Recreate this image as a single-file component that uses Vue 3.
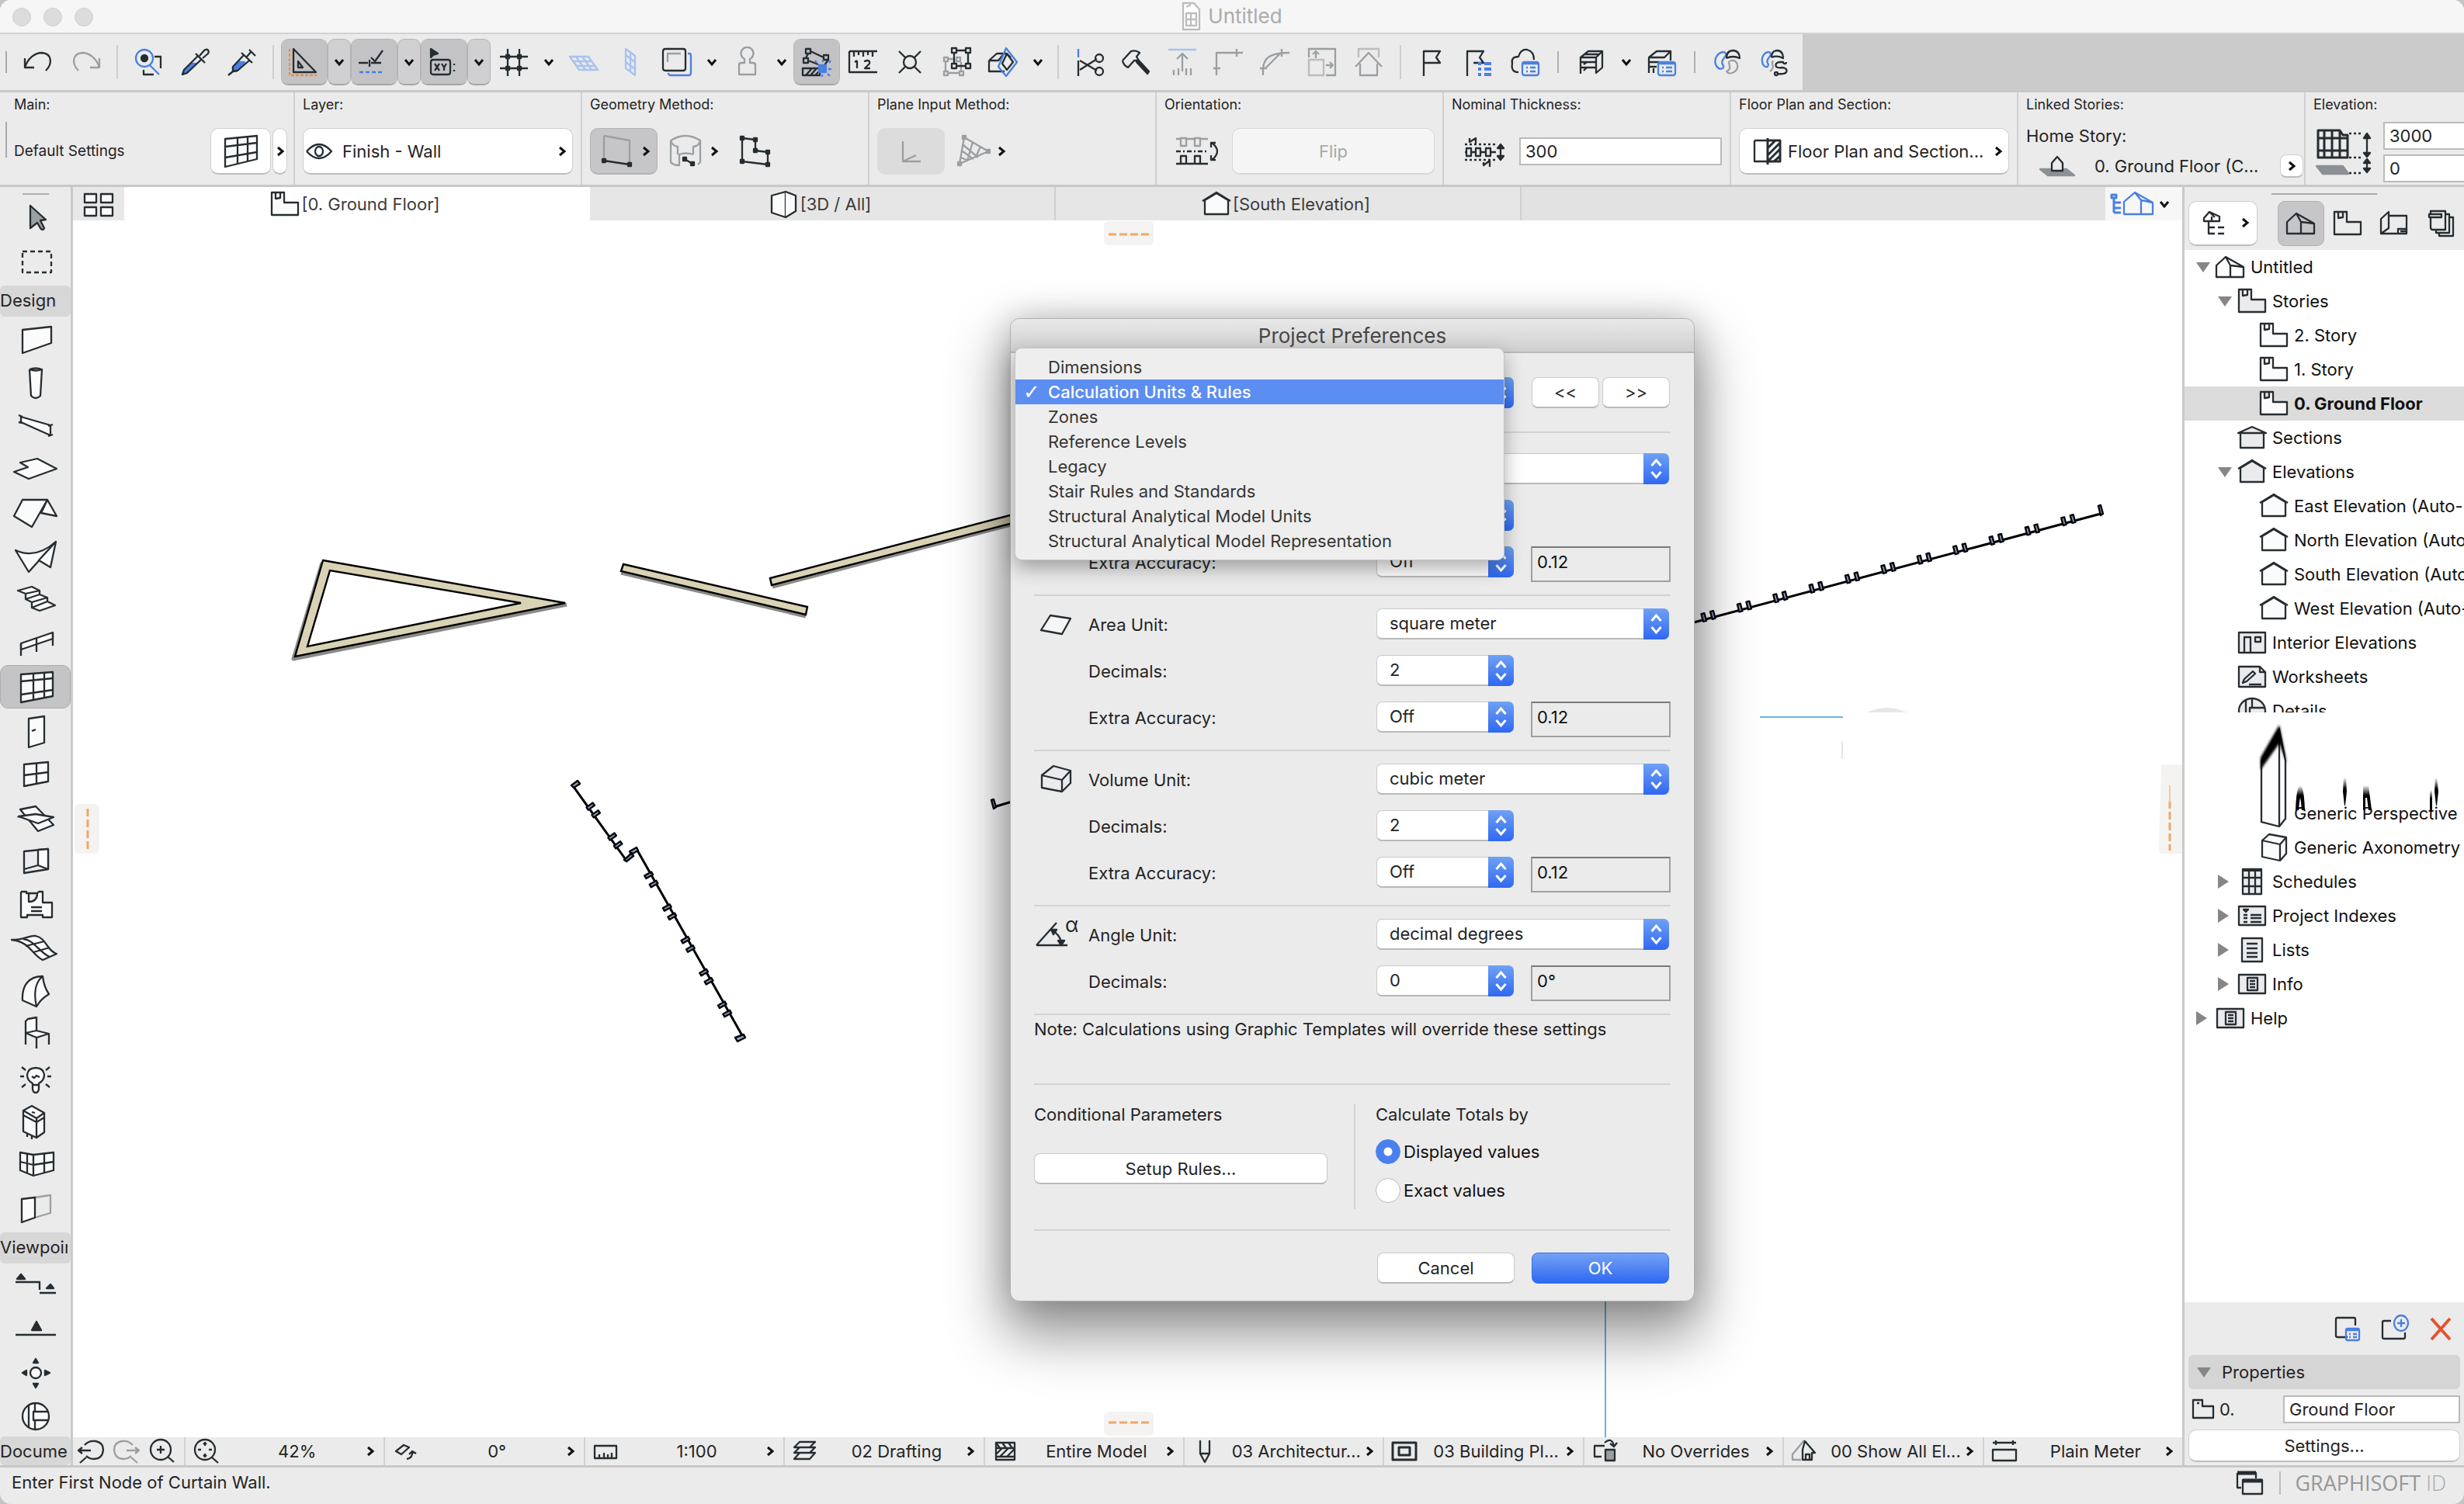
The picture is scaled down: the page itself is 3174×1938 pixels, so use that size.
<script setup>
import { h, ref } from 'vue'

const K = '#262d31'
const B = '#4a80e0'
const G = '#9b9fa2'
const L = '#a9c2f0'
const O = '#e58f4b'
const W = '#fbfbfb'
const E = '#ebebed'

// Each glyph is a list of [stroke, path, fill, dash, width] layers on a 40 x 40 grid.
const glyphs = {
  undo: [[K, 'M2 15V27H14M2 27C6 14 16 8 24 8C37 9 38 22 29 31']],
  redo: [[G, 'M38 15V27H26M38 27C34 14 24 8 16 8C3 9 2 22 11 31']],
  find: [[B, 'M4 15A11 11 0 1 1 26 15A11 11 0 1 1 4 15M22 24L34 36'], [K, 'M11 15A4 4 0 1 1 19 15A4 4 0 1 1 11 15', K], [K, 'M28 13H36V28M33 13H37M14 30V36H27M14 34V37']],
  dropper: [[B, 'M15 22L6 31L4 36L9 34L22 22Z', B], [K, 'M24 12L6 30L4 36L10 34L29 16M21 9L33 21M26 12L32 5C36 2 39 5 37 9L30 15']],
  syringe: [[B, 'M16 20L9 27V32L14 31L24 20Z', B], [K, 'M23 11L9 26V32L3 37M9 32L15 31L30 18M20 8L34 21M27 13L33 6M30 4L38 12']],
  setsquare: [[O, 'M1 3V37H36', 'none', '4 2'], [K, 'M6 3V33H35ZM12 19V27H18Z']],
  snap: [[K, 'M0 21H12M16 21H29M14 17V26M16 14L21 19L31 5'], [B, 'M1 33H30', 'none', '5 3']],
  coords: [[K, 'M3 3V14L6 11L12 9Z', K], [K, 'M6 17H25Q28 17 28 20V33Q28 36 25 36H6Q3 36 3 33V20Q3 17 6 17M8 22L14 31M14 22L8 31M17 22L20 27L23 22M20 27V31M33 22V24M33 30V32']],
  grid: [[K, 'M12 3V12M12 16V27M12 31V38M27 3V12M27 16V27M27 31V38M2 13H9M15 13H24M30 13H38M2 28H9M15 28H24M30 28H38'], [K, 'M10 11H14V15H10ZM25 11H29V15H25ZM10 26H14V30H10ZM25 26H29V30H25Z', K]],
  planeH: [[L, 'M2 13H26L38 30H14ZM10 13L22 30M18 13L30 30M6 19H30M10 25H34']],
  planeV: [[L, 'M14 3L26 12V37L14 28ZM20 8V32M14 11L26 20M14 20L26 29']],
  copy: [[B, 'M34 9H36Q38 9 38 12V34Q38 37 35 37H12Q9 37 9 34'], [K, 'M5 3H28Q31 3 31 6V28Q31 31 28 31H5Q2 31 2 28V6Q2 3 5 3'], [G, 'M8 20V9H25']],
  person: [[G, 'M17 21V16A8 8 0 1 1 24 16V21H28Q31 21 31 24V36H10V24Q10 21 13 21Z']],
  nodes: [[K, 'M6 3H12V9H6ZM3 15H9V21H3ZM29 11H35V17H29ZM12 6L29 14M9 9L6 15M9 18L22 23M35 17L30 24M2 28H24V37H2ZM6 37L14 28M12 37L20 28M18 37L24 31'], [B, 'M23 24H32V33H23Z', B], [B, 'M20 21L18 18M36 21L38 18M35 29H39M34 35L37 38M27 36V39M28 20V17']],
  measure: [[K, 'M2 6H38M2 6V33H38M8 7V13M14 7V11M20 7V13M26 7V11M32 7V13M12 18V28M9 20L12 18M22 20Q22 18 25 18Q29 18 28 22L22 28H29']],
  cross: [[K, 'M6 6L14 14M34 6L26 14M6 34L14 26M34 34L26 26M20 12A8 8 0 1 1 20 28A8 8 0 1 1 20 12']],
  group: [[G, 'M4 14H9V19H4ZM4 32H9V37H4ZM24 32H29V37H24ZM9 34H24M6 19V32M26 20V32M9 16H18M20 14H25V19H20Z'], [K, 'M14 2H20V8H14ZM32 2H38V8H32ZM14 22H20V28H14ZM32 22H38V28H32ZM20 5H32M20 25H32M17 8V22M35 8V22']],
  cube: [[K, 'M2 18L12 9H24L30 14M2 18V32H22M2 18H14L22 8'], [B, 'M24 2L38 20L24 38L14 26Z'], [K, 'M25 9L33 20L25 30L19 22Z']],
  scissors: [[B, 'M6 3V14'], [K, 'M6 18V38M8 18L30 31M8 30L30 16M28 32A5 5 0 1 1 38 32A5 5 0 1 1 28 32M28 15A5 5 0 1 1 38 15A5 5 0 1 1 28 15']],
  hammer: [[K, 'M3 18L14 6Q20 4 25 8L21 13L24 18L18 18L10 27Q4 24 3 18'], [K, 'M24 18L37 32L35 35L21 20Z', K]],
  align: [[L, 'M2 4H38'], [G, 'M20 32V9M13 16L20 9L27 16M9 30V37M15 28V37M25 28V37M31 28V37']],
  corner: [[G, 'M4 37V8H38M0 28H9M30 3V13']],
  curve: [[G, 'M4 37V28C5 14 14 8 38 8M0 28H9M28 3V13M7 28L26 9']],
  resize: [[G, 'M3 14V3H37V37H25M12 15V7M8 10L12 6L16 10M25 24H34M30 20L34 24L30 28'], ['#bcbcbc', 'M3 17H22V37H3Z']],
  roofup: [['#bcbcbc', 'M7 14V3H33V14'], [G, 'M3 26L20 8L37 26M9 22V37H31V22']],
  flag: [[K, 'M10 38V6H31L26 14L31 21H10']],
  flagList: [[K, 'M6 38V6H27L22 14L27 21H14'], [B, 'M20 22H24M28 22H37M20 29H24M28 29H37M20 36H24M28 36H37', 'none', '', 4]],
  cloud: [[K, 'M12 33Q2 33 4 22Q2 13 12 13Q15 3 23 4Q32 6 32 17'], [B, 'M20 20H35Q38 20 38 23V34Q38 37 35 37H20Q17 37 17 34V23Q17 20 20 20M18 22H37M22 27H24M27 27H34M22 32H24M27 32H34']],
  shelf: [[K, 'M6 35V14L16 6H34V27L26 34V14L34 6M6 14H26M6 20H26M6 27H26M12 10H30M10 23L14 20M10 31L14 27']],
  shelfList: [[K, 'M4 34V14L14 6H32V18M4 14H24L32 6M4 20H18M4 26H14M10 34V28'], [B, 'M19 20H35Q38 20 38 23V34Q38 37 35 37H19Q16 37 16 34V23Q16 20 19 20M17 22H37M21 27H23M26 27H34M21 32H23M26 32H34']],
  swirl: [[B, 'M14 7C5 8 1 18 5 25C9 31 17 29 13 23C9 17 19 14 17 9Q16 7 14 7'], [K, 'M18 15Q18 5 27 5Q35 6 35 15Q26 11 18 15'], [G, 'M24 18C16 20 28 27 18 32C22 38 34 32 32 23Q30 17 24 18']],
  swirlLink: [[B, 'M12 7C5 8 2 16 5 23C8 28 14 27 11 21C8 16 16 13 15 9Q14 7 12 7'], [K, 'M16 14Q16 5 24 5Q31 6 31 15Q23 11 16 14'], [G, 'M18 18C14 22 22 26 14 32'], [K, 'M35 20A2 2 0 1 1 31 20H26Q20 21 22 26Q24 28 30 27Q37 28 35 33Q33 36 24 35M24 35A2 2 0 1 1 20 35A2 2 0 1 1 24 35']],

  arrow: [[K, 'M13 4L33 22L26 23L31 33Q29 37 26 33L22 26L13 33Z', G]],
  marquee: [[K, 'M3 7H40V34H3Z', 'none', '6 4']],
  wall: [[K, 'M3 8L40 4V25L3 38Z', W]],
  column: [[K, 'M12 3L14 37Q20 43 26 37L28 3', W], [K, 'M12 3Q20 0 28 3Q20 6 12 3', W]],
  beam: [[K, 'M1 8L39 19V32L1 15Z', W], [K, 'M-2 6L3 8M-2 15L3 16M36 20L42 18M36 33L42 31']],
  slab: [[K, 'M0 11L22 6L47 19L11 32L-8 23L10 17Z', W]],
  roof: [[K, 'M3 3H35L15 38L-8 24Z', W], [K, 'M35 3L47 24L27 20Z', W]],
  shell: [[K, 'M-6 12Q20 24 46 1L11 40Z', W], [K, 'M46 1L39 34L24 25Z', W]],
  stair: [[K, 'M-3 8L15 3L25 8V13L35 17V22L45 27L25 34L15 30V23L7 19V12Z', W], [K, 'M7 12L25 8M7 19L25 13M15 23L35 17M15 30L35 22']],
  railing: [[K, 'M1 20L42 6V14L1 28Z', W], [K, 'M1 20V36M21 13V31M42 6V23']],
  curtain: [[K, 'M1 4L42 1V32L1 40Z', W], [K, 'M17 3V37M31 2V34M1 13L42 9M1 30L42 24']],
  door: [[K, 'M11 5L31 2V36L11 42Z', W], [K, 'M15 21L20 19']],
  window: [[K, 'M5 8L36 5V30L5 36Z', W], [K, 'M21 6V33M5 22L36 18']],
  skylight: [[G, 'M-4 20L20 16', 'none'], [K, 'M0 10L20 6L43 30L23 38Z', W], [K, 'M-2 19L20 16L43 20L23 28Z', W]],
  opening: [[K, 'M5 8L36 5V31L5 36Z', E], [K, 'M23 6L36 5V31L23 26Z', W], [K, 'M5 31L23 26']],
  zone: [[K, 'M1 4H8V6H21M11 6V17C19 17 22 12 22 6L24 4H29V18H41V37H29V34H9V37H1V4', W], [K, 'M14 24H28M14 29H28']],
  mesh: [[K, 'M-11 10C5 10 12 4 20 5C34 8 34 24 47 28L29 36C16 30 12 12 -11 10Z', W], [K, 'M4 9C18 10 24 26 38 32M7 18L31 12M17 26L38 20']],
  morph: [[K, 'M3 32C2 14 10 1 29 1C30 12 33 18 37 24C30 28 25 33 21 40Z', W], [K, 'M29 1C20 8 17 22 21 40']],
  chair: [[K, 'M7 18V3L10 0L21 -2V15ZM7 18L21 15L37 19L21 24Z', W], [K, 'M7 18V33M21 24V38M37 19V33']],
  lamp: [[K, 'M16 33V27Q9 23 9 16Q10 7 20 7Q30 7 31 16Q31 23 24 27V33Q24 39 20 39Q16 39 16 33M16 29H24', W], [K, 'M15 18L18 20L21 17L25 19M2 6L7 10M38 6L33 10M0 18H5M35 18H40M2 32L7 28M38 32L33 28']],
  cabinet: [[K, 'M4 6L15 0L31 9V34L21 41L4 33Z', W], [K, 'M4 6L21 16L31 9M4 12L21 21L31 15M21 16V41M9 36V40M15 39V43M15 8L19 9']],
  curtain2: [[K, 'M0 4L17 7L43 4V27L17 34L0 27Z', W], [K, 'M17 7V34M9 5V31M31 5V31M0 16L17 20L43 16']],
  panel: [[G, 'M19 6L39 3V26L19 32'], [K, 'M2 8L19 6V32L2 38Z', W]],
  section: [[K, 'M-6 15H25V25M25 29H46'], [K, 'M-4 11L1 5L6 11ZM34 23L39 18L43 23Z', K]],
  elevation: [[K, 'M-6 27H46'], [K, 'M15 21L21 10L27 21Z', K]],
  compass: [[K, 'M13 20A7 7 0 1 1 27 20A7 7 0 1 1 13 20', W], [K, 'M17 7L20 2L23 7ZM17 34L20 39L23 34ZM8 17L3 20L8 23ZM32 17L38 20L32 23Z', K]],
  detail: [[K, 'M3 20A17 17 0 1 1 37 20A17 17 0 1 1 3 20', W], [K, 'M11 6V34M19 3V14M19 25V37M36 14H17V25H36']],

  curtainBtn: [[K, 'M0 4L41 0V30L0 40Z', W], [K, 'M16 3V36M29 2V33M0 14L41 9M0 28L41 21']],
  eye: [[K, 'M4 20Q20 2 36 20Q20 38 4 20M15 20A5 6 0 1 1 25 20A5 6 0 1 1 15 20']],
  single: [[G, 'M3 0L36 6V34M3 0V32'], [K, 'M3 32L36 37M1 30H5V34H1ZM34 35H38V39H34Z', K]],
  column2: [[G, 'M1 6Q20 -6 39 6Q38 13 30 14V24M1 6Q3 13 10 14V24M1 6V34Q4 38 12 38V24Q20 21 30 24M39 6V34L36 37'], [K, 'M19 30L29 36M17 28H21V32H17ZM27 34H31V38H27Z', K]],
  polygon: [[K, 'M3 3L20 5V19L36 21V37L3 33Z'], [K, 'M1 1H5V5H1ZM18 3H22V7H18ZM18 17H22V21H18ZM34 19H38V23H34ZM34 35H38V39H34ZM1 31H5V35H1Z', K]],
  axis: [[G, 'M9 7V33H32M9 33L26 25']],
  net: [[G, 'M9 2L40 20L3 36ZM8 12L27 28M7 20L21 30M5 28L14 32M20 8L13 32M30 14L24 27'], [G, 'M7 0H11V4H7ZM38 18H42V22H38ZM1 34H5V38H1Z', G]],
  orient: [[G, 'M-8 4H-2M6 4H15M23 4H33M-2 3H5V13H-2ZM16 3H23V13H16Z'], [K, 'M-8 20H34', 'none', '6 3 2 3'], [K, 'M-8 36H-2M6 36H15M23 36H33M-2 26H5V36H-2ZM16 26H23V36H16ZM38 9Q52 20 38 31M43 9H37V15M43 31H37V25']],
  thick: [[K, 'M-6 11H34M-6 31H34', 'none', '3 3'], [K, 'M-6 21H-4M2 21H7M15 21H20M28 21H34M-4 16H2V26H-4ZM8 16H14V26H8ZM21 16H27V26H21ZM40 12V30M0 3V8L8 3V10M18 34V38L26 32V40'], [K, 'M36 16L40 11L44 16ZM36 26L40 31L44 26Z', K]],
  floorSection: [[K, 'M3 6H20M3 6V33H20', W], [K, 'M20 3V37M20 6H36V33H20M20 16L30 6M20 25L36 9M20 33L36 17M28 33L36 26', 'none', '', 3]],
  home: [['#8b9194', 'M-2 24H32L42 32H8Z', '#8b9194'], [K, 'M13 26V16L20 8L27 16V26Z', E]],
  height: [['#8b9194', 'M-14 38H20L27 48H-6Z', '#8b9194'], [K, 'M-12 -8H16L20 -2H26V27H-12ZM-4 -8V27M6 -8V27M16 -8V27M-12 2H26M-12 18H26', 'none', '', 3], [K, 'M28 -4H45M28 27H45M28 47H45', 'none', '3 3'], [K, 'M51 -2V24M51 30V45M47 2L51 -4L55 2ZM47 21L51 26L55 21ZM47 34L51 29L55 34ZM47 41L51 46L55 41Z', K]],

  overview: [[K, 'M2 7H17V18H2ZM23 7H38V18H23ZM2 24H17V35H2ZM23 24H38V35H23Z', W]],
  story: [[K, 'M3 5H19V18H37V34H3ZM8 5V13L14 12V5', W]],
  storyFill: [[K, 'M3 5H19V18H37V34H3ZM8 5V13L14 12V5', E]],
  box3d: [[K, 'M4 9L22 4V37L4 31Z', W], [K, 'M22 4L35 9V29L22 37', W]],
  house: [[K, 'M5 15L20 6L35 15V33H5ZM2 16L20 5L38 16', W]],
  houseFill: [[K, 'M5 15L20 6L35 15V33H5ZM2 16L20 5L38 16', E]],
  sectionFill: [[K, 'M5 14H35V33H5ZM2 14L20 6L38 14Z', E]],
  project: [[K, 'M2 18L14 7L20 18V33H2ZM14 7L37 20V33H20M20 18L37 20', 'none']],
  projectBlue: [[B, 'M0 17L14 5L22 15V33H0ZM14 5L37 18V33H22M22 15L37 18'], [B, 'M-16 8H-10V12H-16ZM-13 12V31M-13 18H-4M-13 25H-4M-13 31H-4', 'none', '', 3]],
  navTree: [[K, 'M4 14L11 6L24 12V18H4ZM14 12V18M11 6L18 13M10 18V34H18M10 26H18M22 26H30M22 34H30']],
  storyTab: [[K, 'M3 5H19V18H37V34H3ZM8 5V13L14 12V5']],
  layoutTab: [[K, 'M3 14L13 5V26L3 33ZM13 10H36V33H3M25 33V27H36M28 30H36']],
  books: [[K, 'M7 8V4H26V28H10Q7 28 7 25V12M5 8H21V12H5ZM26 8H31V32H14V28M31 12H36V36H18V32']],
  interior: [[K, 'M3 7H37V33H3Z', E], [K, 'M10 33V13H18V33M24 13H31V19H24Z']],
  worksheet: [[K, 'M3 7H30L37 14V33H3ZM30 7V14H37', E], [K, 'M8 28L10 23L21 13L24 16L13 26ZM16 30H32']],
  details: [[K, 'M3 22A17 16 0 1 1 37 22A17 16 0 1 1 3 22', E], [K, 'M12 8V36M20 6V18M36 18H17V36']],
  axo: [[K, 'M5 11L14 3L36 7V28L28 37L5 32ZM5 11L28 16L36 7M28 16V37', W]],
  schedule: [[K, 'M8 4H32V36H8ZM8 15H32M8 26H32M16 4V36M24 4V36', E], [K, 'M8 5H32', 'none', '', 4]],
  index: [[K, 'M3 8H37V32H3Z', E], [K, 'M9 19H14M18 19H32M9 23H14M18 23H32M9 28H14M18 28H32'], [K, 'M9 12H15L12 15Z', K]],
  lists: [[K, 'M7 5H33V35H7Z', E], [K, 'M13 12H27M13 18H27M13 24H27M13 29H27']],
  info: [[K, 'M3 8H37V32H3Z', E], [K, 'M14 12H27V28H14ZM17 16H24M17 20H24M17 24H24']],
  storySmall: [[K, 'M6 8H18V16H32V31H6ZM11 12H14']],

  zoomBack: [[K, 'M12 12Q17 6 26 7Q36 9 36 18Q35 30 24 30Q18 30 14 26M4 19H20M9 15L4 19L9 23M14 28L6 35']],
  zoomFwd: [[G, 'M28 12Q23 6 14 7Q4 9 4 18Q5 30 16 30Q22 30 26 26M36 19H20M31 15L36 19L31 23M26 28L34 35']],
  zoomIn: [[K, 'M5 18A12 12 0 1 1 31 18A12 12 0 1 1 5 18M27 27L35 34M13 18H23M18 13V23']],
  zoomFit: [[K, 'M6 18A13 13 0 1 1 32 18A13 13 0 1 1 6 18M28 28L36 35M19 9V13M19 23V27M10 18H14M24 18H28M17 11L19 9L21 11M17 25L19 27L21 25']],
  rotate: [[K, 'M8 20L18 12L25 15L15 24ZM22 30Q30 29 29 20M25 24L29 20L34 23']],
  scale: [[K, 'M6 13H34V29H6ZM12 29V24M18 29V22M23 29V24M28 29V22']],
  layers: [[K, 'M13 8H33L26 15H6ZM13 15H33L26 22H6ZM13 22H33L26 30H6Z']],
  model: [[K, 'M8 9H32V31H8ZM8 27H32M8 16H32M8 9L13 16M16 9L21 16M24 9L29 16M8 24L16 16M13 27L24 16M22 27L32 17']],
  pen: [[K, 'M14 6V23L20 34L26 23V6M14 23H26']],
  frame: [[K, 'M5 9H35V31H5ZM13 15H27V25H13Z', 'none', '', 3]],
  override: [[K, 'M20 13H7V27H16M20 9Q29 1 32 13M27 10L32 14L36 9'], [K, 'M21 18H33V32H21Z', G]],
  reno: [[G, 'M20 6L5 24V31H16'], [K, 'M18 31V18L21 7L34 22H30V31ZM22 31V24H27V31']],
  dim: [[K, 'M5 9H35M9 6V12M31 6V12M5 18H35V32H5Z']],
  settingsDoc: [[K, 'M20 31H7Q5 31 5 29V8Q5 6 7 6H28Q30 6 30 8V16'], [B, 'M20 20H33Q35 20 35 22V33Q35 35 33 35H20Q18 35 18 33V22Q18 20 20 20M18 22H35M22 27H24M27 27H32M22 31H24M27 31H32']],
  addDoc: [[K, 'M16 10H7Q5 10 5 12V31Q5 33 7 33H32Q34 33 34 31V25'], [B, 'M20 13A9 10 0 1 1 38 13A9 10 0 1 1 20 13M24 13H34M29 8V18']],
  remove: [['#e2532f', 'M8 7L32 34M32 7L8 34', 'none', '', 4]],
  windows: [[K, 'M4 7H28V14M4 7V26H9M11 16H36V34H11Z'], [K, 'M4 7H28M11 17H36', 'none', '', 5]],
  area: [[K, 'M4 28L16 9L42 13L31 33Z', '#f6f6f6']],
  volume: [[K, 'M5 15L20 3L42 9L31 21L31 36L5 31ZM31 36L42 25V9M5 15L31 21', E]],
  angle: [[K, 'M-2 34H38M-2 34L24 5M18 15Q28 20 30 30', 'none'], [K, 'M17 14H24L20 20ZM26 28H34L30 34Z', K]],
  doc: [['#bdbdbd', 'M10 3H24L31 11V37H10ZM14 16H27V32H14ZM14 24H27M20 16V32M14 8L20 5', '#fff']],
}

const Glyph = (props) =>
  h(
    'svg',
    { class: 'glyph', width: 40, height: 40, viewBox: '0 0 40 40', 'aria-hidden': 'true' },
    glyphs[props.name].map(([stroke, d, fill, dash, width]) =>
      h('path', {
        d,
        stroke,
        fill: fill || 'none',
        'stroke-width': width || 2.3,
        'stroke-dasharray': dash || undefined,
        'stroke-linejoin': 'round',
      })
    )
  )
Glyph.props = ['name']

const Chevron = (props) =>
  h('svg', { class: 'chev', width: 14, height: 14, viewBox: '0 0 14 14', 'aria-hidden': 'true' }, [
    h('path', { d: props.down ? 'M2 4L7 10L12 4' : 'M4 2L10 7L4 12', fill: 'none', stroke: '#111', 'stroke-width': 3 }),
  ])
Chevron.props = ['down']

const toolbar = [
  'undo', 'redo', '|', 'find', 'dropper', 'syringe', '|', '+setsquare', '+v', '+snap', '+v', '+coords', '+v',
  'grid', 'v', 'planeH', 'planeV', 'copy', 'v', 'person', 'v', '+nodes', 'measure', 'cross', 'group', 'cube', 'v', '|',
  'scissors', 'hammer', 'align', 'corner', 'curve', 'resize', 'roofup', '|', 'flag', 'flagList', 'cloud', '||',
  'shelf', 'v', 'shelfList', '||', 'swirl', 'swirlLink',
].map((raw) => {
  const on = raw[0] === '+'
  const name = on ? raw.slice(1) : raw
  return { name, on, kind: name === '|' ? 'sep' : name === '||' ? 'sep short' : name === 'v' ? 'drop' : 'tool' }
})

const designTools = ['wall', 'column', 'beam', 'slab', 'roof', 'shell', 'stair', 'railing', 'curtain', 'door', 'window', 'skylight', 'opening', 'zone', 'mesh', 'morph', 'chair', 'lamp', 'cabinet', 'curtain2', 'panel']
const viewTools = ['section', 'elevation', 'compass', 'detail']

const tabs = [
  { icon: 'story', label: '[0. Ground Floor]', on: true },
  { icon: 'box3d', label: '[3D / All]' },
  { icon: 'house', label: '[South Elevation]' },
]

const quick = [
  ['zoomFit', '42%'], ['rotate', '0°'], ['scale', '1:100'], ['layers', '02 Drafting'], ['model', 'Entire Model'],
  ['pen', '03 Architectur...'], ['frame', '03 Building Pl...'], ['override', 'No Overrides'], ['reno', '00 Show All El...'], ['dim', 'Plain Meter'],
]

const tree = [
  { l: 0, a: 'down', i: 'project', t: 'Untitled' },
  { l: 1, a: 'down', i: 'storyFill', t: 'Stories' },
  { l: 2, i: 'story', t: '2. Story' },
  { l: 2, i: 'story', t: '1. Story' },
  { l: 2, i: 'story', t: '0. Ground Floor', on: true },
  { l: 1, i: 'sectionFill', t: 'Sections' },
  { l: 1, a: 'down', i: 'houseFill', t: 'Elevations' },
  { l: 2, i: 'house', t: 'East Elevation (Auto-' },
  { l: 2, i: 'house', t: 'North Elevation (Auto-' },
  { l: 2, i: 'house', t: 'South Elevation (Auto-' },
  { l: 2, i: 'house', t: 'West Elevation (Auto-' },
  { l: 1, i: 'interior', t: 'Interior Elevations' },
  { l: 1, i: 'worksheet', t: 'Worksheets' },
  { l: 1, i: 'details', t: 'Details', cut: true },
  { l: 2, t: 'Generic Perspective', tall: true },
  { l: 2, i: 'axo', t: 'Generic Axonometry' },
  { l: 1, a: 'right', i: 'schedule', t: 'Schedules' },
  { l: 1, a: 'right', i: 'index', t: 'Project Indexes' },
  { l: 1, a: 'right', i: 'lists', t: 'Lists' },
  { l: 1, a: 'right', i: 'info', t: 'Info' },
  { l: 0, a: 'right', i: 'info', t: 'Help' },
]

const pages = ['Dimensions', 'Calculation Units & Rules', 'Zones', 'Reference Levels', 'Legacy', 'Stair Rules and Standards', 'Structural Analytical Model Units', 'Structural Analytical Model Representation']
const page = ref('Calculation Units & Rules')
const totals = ref('displayed')

const accuracy = (id) => ({ id: id + '-acc', label: 'Extra Accuracy:', value: 'Off', sample: '0.12' })
const blocks = [
  { rows: [{ id: 'len', label: '', value: '', wide: true }, { id: 'len-dec', label: '', value: '' }, accuracy('len')] },
  { icon: 'area', rows: [{ id: 'area', label: 'Area Unit:', value: 'square meter', wide: true }, { id: 'area-dec', label: 'Decimals:', value: '2' }, accuracy('area')] },
  { icon: 'volume', rows: [{ id: 'vol', label: 'Volume Unit:', value: 'cubic meter', wide: true }, { id: 'vol-dec', label: 'Decimals:', value: '2' }, accuracy('vol')] },
  { icon: 'angle', rows: [{ id: 'ang', label: 'Angle Unit:', value: 'decimal degrees', wide: true }, { id: 'ang-dec', label: 'Decimals:', value: '0', sample: '0°' }] },
]

// Mullion ticks along a curtain wall: start point, unit direction, distances along it, and side.
const ticks = (x, y, ux, uy, offsets, side) =>
  offsets.map((t) => {
    const px = x + ux * t
    const py = y + uy * t
    const nx = uy * side
    const ny = -ux * side
    const a = [px - ux * 2 - nx * 2, py - uy * 2 - ny * 2]
    return `M${a}l${ux * 4} ${uy * 4}l${nx * 10} ${ny * 10}l${-ux * 4} ${-uy * 4}z`
  }).join('')
const pairs = (first, pitch, gap, n) => Array.from({ length: n }, (_, i) => [first + i * pitch, first + i * pitch + gap]).flat()
const mullions = [
  ticks(739, 1014, 0.582, 0.813, [33, 45, 81, 94], 1),
  ticks(820, 1094, 0.493, 0.87, [37, 50, 85, 98, 133, 146, 181, 194, 229, 242], -1),
  ticks(2182, 802, 0.966, -0.258, pairs(14, 48, 12, 11), 1),
].join('')
</script>

<template>
  <div class="app">
    <header class="titlebar">
      <div class="lights"><i></i><i></i><i></i></div>
      <h1><Glyph name="doc" />Untitled</h1>
    </header>

    <div class="toolbar-row">
      <nav class="toolbar">
        <template v-for="(t, n) in toolbar" :key="n">
          <span v-if="t.name[0] === '|'" :class="t.kind"></span>
          <button v-else :class="[t.kind, { on: t.on }]" :aria-label="t.kind === 'drop' ? 'More' : t.name">
            <Chevron v-if="t.kind === 'drop'" down="1" />
            <Glyph v-else :name="t.name" />
          </button>
        </template>
      </nav>
    </div>

    <section class="infobox">
      <div class="cell first">
        <h2>Main:</h2>
        <div class="line spread">
          <span class="small">Default Settings</span>
          <span class="duo">
            <button class="pill sq" aria-label="Curtain wall settings"><Glyph name="curtainBtn" /></button>
            <button class="pill thin" aria-label="Favorites"><Chevron /></button>
          </span>
        </div>
      </div>
      <div class="cell">
        <h2>Layer:</h2>
        <div class="line"><button class="pill full"><Glyph name="eye" /><span class="grow">Finish - Wall</span><Chevron /></button></div>
      </div>
      <div class="cell">
        <h2>Geometry Method:</h2>
        <div class="line">
          <button class="pill method on" aria-label="Single"><Glyph name="single" /><Chevron /></button>
          <button class="bare method" aria-label="Cylinder"><Glyph name="column2" /><Chevron /></button>
          <button class="bare sq" aria-label="Polygon"><Glyph name="polygon" /></button>
        </div>
      </div>
      <div class="cell">
        <h2>Plane Input Method:</h2>
        <div class="line">
          <button class="pill method off" disabled aria-label="Plane"><Glyph name="axis" /></button>
          <button class="bare method" aria-label="Net"><Glyph name="net" /><Chevron /></button>
        </div>
      </div>
      <div class="cell">
        <h2>Orientation:</h2>
        <div class="line"><span class="lead"><Glyph name="orient" /></span><button class="pill flip" disabled>Flip</button></div>
      </div>
      <div class="cell">
        <h2><label for="thick">Nominal Thickness:</label></h2>
        <div class="line"><span class="lead"><Glyph name="thick" /></span><input id="thick" class="box" value="300" /></div>
      </div>
      <div class="cell">
        <h2>Floor Plan and Section:</h2>
        <div class="line"><button class="pill full plan"><Glyph name="floorSection" /><span class="grow">Floor Plan and Section...</span><Chevron /></button></div>
      </div>
      <div class="cell linked">
        <h2>Linked Stories:</h2>
        <div class="home">Home Story:</div>
        <div class="story"><Glyph name="home" /><span class="grow">0. Ground Floor (C...</span><button class="pill mini" aria-label="Choose story"><Chevron /></button></div>
      </div>
      <div class="cell last">
        <h2>Elevation:</h2>
        <div class="elev">
          <Glyph name="height" />
          <div class="fields"><input class="box" aria-label="Top elevation" value="3000" /><input class="box" aria-label="Bottom elevation" value="0" /></div>
        </div>
      </div>
    </section>

    <main class="work">
      <aside class="tools">
        <div class="tool-list">
          <i class="grip"></i>
          <button aria-label="arrow"><Glyph name="arrow" /></button>
          <button aria-label="marquee"><Glyph name="marquee" /></button>
          <h3><span>Design</span></h3>
          <button v-for="t in designTools" :key="t" :aria-label="t" :class="{ on: t === 'curtain' }"><Glyph :name="t" /></button>
          <h3><span>Viewpoint</span></h3>
          <button v-for="t in viewTools" :key="t" :aria-label="t"><Glyph :name="t" /></button>
        </div>
        <h3 class="bottom"><span>Document</span></h3>
      </aside>

      <section class="center">
        <div class="tabs">
          <button class="overview" aria-label="Tab overview"><Glyph name="overview" /></button>
          <button v-for="t in tabs" :key="t.label" class="tab" :class="{ on: t.on }"><Glyph :name="t.icon" /><span>{{ t.label }}</span></button>
          <button class="popnav" aria-label="Navigator"><Glyph name="projectBlue" /><Chevron down="1" /></button>
        </div>

        <div class="canvas">
          <svg class="drawing" viewBox="94 284 2717 1568" preserveAspectRatio="xMinYMin slice" aria-hidden="true">
            <g fill="#f4f3f2">
              <rect x="1422" y="285" width="64" height="31" rx="6" />
              <rect x="1422" y="1819" width="64" height="31" rx="6" />
              <rect x="96" y="1036" width="32" height="64" rx="6" />
              <path d="M2784 985H2811V1100H2786Q2781 1100 2781 1094Z" />
            </g>
            <g stroke="#f0a765" stroke-width="3" stroke-dasharray="10 4">
              <path d="M1428 302H1482M1428 1833H1482M113 1042V1096M2795 1032V1096" />
            </g>
            <path d="M2795 1012V1034" stroke="#f6c9a2" stroke-width="2" />
            <g fill="none" stroke="#8a8a86" stroke-width="5" stroke-linejoin="round">
              <path d="M415 725L378 849L730 779M800 738L1038 794M995 756L1310 674" />
            </g>
            <g fill="#d9d2b4" stroke="#000" stroke-width="2.4" fill-rule="evenodd">
              <path d="M416 722L728 777L380 846ZM425 735L396 833L671 777Z" />
              <path d="M803 727L1040 782L1038 792L800 736Z" />
              <path d="M992 745L1320 659V670L994 754Z" />
            </g>
            <g fill="none" stroke="#000" stroke-width="3">
              <path d="M739 1014L807 1109M820 1094L957 1336M2182 802L2706 662M1280 1040L1310 1031" />
            </g>
            <g fill="#8fa3c4" stroke="#05070c" stroke-width="2.4" stroke-linejoin="round">
              <path :d="mullions" />
              <path d="M736 1012L744 1006L747 1010L739 1015ZM804 1108L814 1099L816 1103L807 1110ZM811 1097L820 1092L822 1096L813 1101ZM947 1337L958 1333L960 1337L950 1342ZM1277 1031L1280 1030L1283 1040L1280 1042ZM2703 652L2706 651L2709 662L2706 664Z" />
            </g>
            <path d="M2267 924H2374M2068 1660V1852" stroke="#6bb3da" stroke-width="2" fill="none" />
            <path d="M2405 918Q2430 906 2456 918Z" fill="#e6e6e6" />
            <path d="M2373 955V978" stroke="#e6e6e6" stroke-width="2" />
          </svg>
        </div>

        <div class="quickbar">
          <div class="zooms">
            <button aria-label="Previous zoom"><Glyph name="zoomBack" /></button>
            <button aria-label="Next zoom"><Glyph name="zoomFwd" /></button>
            <button aria-label="Zoom in"><Glyph name="zoomIn" /></button>
          </div>
          <button v-for="q in quick" :key="q[0]" class="option"><Glyph :name="q[0]" /><span>{{ q[1] }}</span><Chevron /></button>
        </div>
      </section>

      <aside class="navigator">
        <div class="navhead">
          <button class="pill navbtn" aria-label="Project chooser"><Glyph name="navTree" /><Chevron /></button>
          <button class="navtab on" aria-label="Project map"><Glyph name="project" /></button>
          <button class="navtab" aria-label="View map"><Glyph name="storyTab" /></button>
          <button class="navtab" aria-label="Layout book"><Glyph name="layoutTab" /></button>
          <button class="navtab" aria-label="Publisher"><Glyph name="books" /></button>
        </div>
        <div class="tree">
          <button v-for="r in tree" :key="r.t" class="node" :class="['level' + r.l, { on: r.on, cut: r.cut, tall: r.tall }]">
            <i class="twist" :class="r.a"></i>
            <Glyph v-if="r.i" :name="r.i" />
            <svg v-else class="smear" width="264" height="152" viewBox="0 0 264 152" aria-hidden="true">
              <defs>
                <linearGradient id="fade" x1="0" y1="0" x2="0" y2="1"><stop offset="0" stop-color="#000" stop-opacity="0" /><stop offset="0.4" stop-color="#000" /></linearGradient>
                <filter id="soft"><feGaussianBlur stdDeviation="1.6" /></filter>
              </defs>
              <path d="M5 62V141L28 147L36 137V62L28 22Z" fill="#fdfdfd" stroke="#262d31" stroke-width="2.3" />
              <path d="M28 22V147" stroke="#262d31" stroke-width="2.3" />
              <path d="M4 74V58L28 16L38 66L28 40Z" fill="#000" filter="url(#soft)" />
              <g fill="url(#fade)">
                <path d="M49 126Q50 96 55 94Q60 96 61 126H57Q56 114 55 110Q54 114 53 126Z" />
                <path d="M111 84H114L115 102L113 120H112L110 102Z" />
                <path d="M136 94H143L147 126H143L141 110H139V126H136Z" />
                <path d="M222 100H225V128H222Z" />
                <path d="M229 84H231L233 102L231 120H230L228 102Z" />
              </g>
            </svg>
            <span>{{ r.t }}</span>
          </button>
        </div>
        <div class="props">
          <div class="actions">
            <button aria-label="Settings"><Glyph name="settingsDoc" /></button>
            <button aria-label="Add"><Glyph name="addDoc" /></button>
            <button aria-label="Delete"><Glyph name="remove" /></button>
          </div>
          <button class="prophead"><i class="twist down"></i>Properties</button>
          <div class="proprow"><Glyph name="storySmall" /><label for="storyname">0.</label><input id="storyname" class="box" value="Ground Floor" /></div>
          <button class="pill setbtn">Settings...</button>
        </div>
      </aside>
    </main>

    <footer class="status">
      <span>Enter First Node of Curtain Wall.</span>
      <div class="brand"><Glyph name="windows" /><i></i><a href="#">GRAPHISOFT <em>ID</em></a></div>
    </footer>

    <section class="dialog" role="dialog" aria-labelledby="dlg-title">
      <h2 id="dlg-title" class="dlg-title">Project Preferences</h2>
      <div class="dlg-body">
        <div class="picker">
          <div class="sel pagesel">
            <select aria-label="Preferences page"></select>
            <svg class="arrows" viewBox="0 0 32 40" aria-hidden="true"><path d="M10 16L16 9L22 16M10 24L16 31L22 24" /></svg>
          </div>
          <div class="steps"><button class="push">&lt;&lt;</button><button class="push">&gt;&gt;</button></div>
        </div>

        <div v-for="(b, n) in blocks" :key="n" class="block">
          <div v-for="(r, m) in b.rows" :key="r.id" class="row">
            <span class="rowicon"><template v-if="m === 0 && b.icon"><Glyph :name="b.icon" /><b v-if="b.icon === 'angle'">α</b></template></span>
            <label :for="r.id">{{ r.label }}</label>
            <div class="sel" :class="{ wide: r.wide }">
              <select :id="r.id"><option>{{ r.value }}</option></select>
              <svg class="arrows" viewBox="0 0 32 40" aria-hidden="true"><path d="M10 16L16 9L22 16M10 24L16 31L22 24" /></svg>
            </div>
            <input v-if="r.sample" class="sample" readonly :value="r.sample" :aria-label="r.label + ' sample'" />
          </div>
        </div>

        <p class="note">Note: Calculations using Graphic Templates will override these settings</p>

        <div class="bottomset">
          <div class="cond">
            <h3>Conditional Parameters</h3>
            <button class="push">Setup Rules...</button>
          </div>
          <fieldset class="totals">
            <legend>Calculate Totals by</legend>
            <label><input v-model="totals" type="radio" value="displayed" />Displayed values</label>
            <label><input v-model="totals" type="radio" value="exact" />Exact values</label>
          </fieldset>
        </div>

        <div class="dlg-foot">
          <button class="push">Cancel</button>
          <button class="push primary">OK</button>
        </div>
      </div>

      <ul class="menu" role="listbox" aria-label="Preferences pages">
        <li v-for="p in pages" :key="p" role="option" :aria-selected="p === page" :class="{ on: p === page }"><span>{{ p === page ? '✓' : '' }}</span>{{ p }}</li>
      </ul>
    </section>
  </div>
</template>

<style>
body { background: #c4c4c4; }
</style>

<style scoped>
.app { position: relative; display: flex; flex-direction: column; height: 100vh; overflow: hidden; border-radius: 14px; background: #ebebeb; font-family: Inter, "Liberation Sans", sans-serif; font-size: 22px; line-height: 28px; color: #242424; }
.app *, .app *::before, .app *::after { box-sizing: border-box; }
button, input, select { font: inherit; color: inherit; margin: 0; padding: 0; }
button { display: flex; align-items: center; justify-content: center; border: 0; background: none; white-space: nowrap; }
h1, h2, h3, p, ul, fieldset, legend { margin: 0; padding: 0; border: 0; font-weight: 400; font-size: inherit; list-style: none; }
.glyph { display: block; flex: none; overflow: visible; fill: none; }
.chev { display: block; flex: none; }
.grow { flex: 1; text-align: left; white-space: nowrap; }

.titlebar { position: relative; flex: none; height: 44px; display: flex; align-items: center; justify-content: center; background: #f6f6f6; border-bottom: 2px solid #d2d2d2; }
.titlebar h1 { display: flex; align-items: center; gap: 2px; margin-right: 8px; font-size: 26px; color: #ababab; }
.lights { position: absolute; left: 16px; top: 10px; display: flex; gap: 16px; }
.lights i { width: 24px; height: 24px; border-radius: 50%; background: #dcdcdc; border: 1px solid #cfcfcf; }

.toolbar-row { flex: none; height: 75px; background: #cbcbcb; border-bottom: 3px solid #c8c8c8; display: flex; }
.toolbar { position: relative; display: flex; align-items: center; padding: 0 6px 0 20px; background: #ebebeb; }
.toolbar::before, .first::before { content: ""; position: absolute; left: 7px; top: 22px; width: 2px; height: 28px; background: #a9a9a9; }
.toolbar .tool { width: 60px; height: 60px; }
.toolbar .drop { width: 30px; height: 60px; }
.toolbar .on { background: #c3c3c6; background-clip: padding-box; border-radius: 9px; border: 1px solid #b4b4b6; border-bottom: 2px solid #a6a6a8; }
.toolbar .drop.on { background: #d0d0d2; }
.toolbar .sep { width: 21px; height: 44px; display: flex; align-items: center; justify-content: center; }
.toolbar .sep::before { content: ""; width: 2px; height: 44px; background: #cfcfcf; }
.toolbar .short { width: 26px; }
.toolbar .short::before { height: 28px; background: #b0b0b0; }

.infobox { flex: none; height: 122px; display: flex; border-bottom: 3px solid #c8c8c8; }
.cell { position: relative; flex: none; width: 370px; padding: 0 10px 0 10px; border-right: 2px solid #d0d0d0; }
.cell.first { width: 380px; padding: 0 8px 0 18px; }
.first::before { top: 38px; height: 46px; }
.cell.last { flex: 1; border: 0; padding-right: 0; overflow: hidden; }
.cell h2 { height: 32px; line-height: 32px; font-size: 18px; margin-bottom: 14px; white-space: nowrap; }
.small { font-size: 19px; }
.line { display: flex; align-items: center; height: 60px; }
.spread { justify-content: space-between; }
.duo { display: flex; gap: 2px; }
.pill { height: 60px; background: #fff; border: 1px solid #cfcfcf; border-bottom: 2px solid #bdbdbd; border-radius: 10px; }
.sq { width: 78px; }
.thin { width: 19px; }
.full { width: 100%; padding: 0 6px 0 0; gap: 10px; }
.plan { gap: 6px; padding-left: 16px; }
.method { width: 87px; height: 60px; gap: 10px; padding-left: 6px; }
.bare.method { justify-content: flex-start; padding-left: 16px; }
.method.on { background: #c6c6c9; border-color: #b2b2b4; }
.method.off { background: #dcdcdc; border-color: #dcdcdc; padding: 0; }
.lead { flex: none; width: 87px; display: flex; justify-content: center; padding-right: 2px; }
.line .lead + * { flex: 1; }
.flip { color: #a8a8a8; background: #f5f5f5; border-color: #d8d8d8; }
.box { min-width: 0; height: 36px; padding: 0 6px; background: #fff; border: 2px solid #bbb; border-radius: 0; }
.linked h2 { margin-bottom: 10px; }
.linked .home { height: 28px; }
.story { display: flex; align-items: center; height: 50px; padding-left: 20px; gap: 28px; }
.story .mini { margin-right: -2px; }
.mini { flex: none; width: 30px; height: 30px; border-radius: 8px; }
.elev { display: flex; gap: 32px; padding-left: 18px; align-items: center; margin-top: -8px; }
.fields { flex: none; width: 130px; display: flex; flex-direction: column; gap: 6px; }

.work { flex: 1; min-height: 0; display: flex; border-bottom: 3px solid #c8c8c8; }
.tools { flex: none; width: 94px; border-right: 3px solid #cacaca; display: flex; flex-direction: column; }
.tool-list { flex: 1; min-height: 0; overflow: hidden; display: flex; flex-direction: column; align-items: stretch; }
.grip { flex: none; width: 34px; height: 2px; margin: 8px auto 2px; background: #b0b0b0; }
.tool-list button { flex: none; height: 56px; border-radius: 10px; }
.tool-list button.on { background: #c4c4c7; border: 1px solid #aeaeb0; }
.tools h3 { flex: none; height: 40px; margin: 3px 0 1px; line-height: 38px; background: #d7d7d7; border-radius: 6px; padding: 0 4px 0 0; }
.tools h3 span { display: block; overflow: hidden; white-space: nowrap; }
.tools h3.bottom { height: 37px; margin: 0; }

.center { flex: 1; min-width: 0; display: flex; flex-direction: column; }
.tabs { flex: none; height: 43px; display: flex; background: #e2e2e2; }
.overview { width: 66px; background: #e8e8e8; }
.tab { width: 600px; gap: 1px; padding-right: 6px; color: #3c3c3c; background: #e6e6e6; border-right: 2px solid #cfcfcf; }
.tab.on { background: #fff; border: 0; }
.popnav { width: 99px; margin-left: auto; padding-left: 8px; gap: 5px; background: #f7f7f7; }
.canvas { position: relative; flex: 1; min-height: 0; background: #fff; }
.drawing { position: absolute; inset: 0; width: 100%; height: 100%; display: block; }
.quickbar { flex: none; height: 36px; display: flex; background: #ebebeb; }
.zooms { flex: none; width: 143px; display: flex; }
.zooms button { width: 46px; }
.option { position: relative; flex: 1; min-width: 0; border-left: 2px solid #d2d2d2; padding: 0 10px 0 6px; }
.option span { flex: 1; padding-left: 10px; text-align: center; overflow: hidden; }

.navigator { flex: none; width: 363px; border-left: 3px solid #cacaca; display: flex; flex-direction: column; overflow: hidden; }
.navhead { position: relative; flex: none; height: 81px; display: flex; align-items: center; padding: 12px 0 0 5px; }
.navhead::before { content: ""; position: absolute; left: 112px; top: 8px; width: 136px; height: 2px; background: #acacac; }
.navbtn { flex: none; width: 89px; height: 58px; gap: 10px; padding-left: 6px; margin-right: 26px; }
.navtab { flex: none; width: 60px; height: 58px; }
.navtab.on { background: #c6c6c9; border: 1px solid #b2b2b4; border-radius: 9px; }
.tree { flex: 1; min-height: 0; background: #fff; overflow: hidden; }
.node { width: 100%; height: 44px; justify-content: flex-start; overflow: hidden; color: #111; }
.node.on { background: #dcdcdc; font-weight: 700; }
.node span { margin-left: 6px; }
.node.level0 { padding-left: 15px; }
.node.level1 { padding-left: 43px; }
.node.level2 { padding-left: 71px; }
.node.cut { height: 24px; align-items: flex-start; }
.node.cut span { line-height: 44px; }
.node.tall { position: relative; height: 152px; align-items: flex-end; }
.node.tall span { line-height: 44px; margin-left: 46px; }
.smear { position: absolute; left: 94px; bottom: 0; }
.twist { flex: none; width: 24px; display: flex; justify-content: flex-start; }
.twist.down::before { content: ""; border: 9px solid transparent; border-top: 13px solid #868686; border-bottom: 0; }
.twist.right::before { content: ""; border: 9px solid transparent; border-left: 14px solid #868686; border-right: 0; }
.props { flex: none; height: 210px; padding: 0 5px; }
.actions { height: 68px; display: flex; justify-content: flex-end; }
.actions button { width: 60px; }
.actions button:last-child { margin-right: -5px; }
.prophead { width: 100%; height: 44px; justify-content: flex-start; gap: 8px; padding-left: 11px; background: #d5d5d5; border-radius: 6px; }
.proprow { display: flex; align-items: center; height: 52px; }
.proprow label { flex: none; width: 82px; }
.proprow .box { flex: 1; }
.setbtn { width: 100%; height: 42px; }

.status { flex: none; height: 47px; display: flex; justify-content: space-between; padding: 0 23px 0 15px; }
.status > span { line-height: 38px; }
.brand { display: flex; align-items: center; gap: 18px; height: 40px; }
.brand i { width: 2px; height: 30px; background: #bdbdbd; }
.brand a { color: #979797; text-decoration: none; font-family: "Open Sans", sans-serif; font-size: 27px; }
.brand em { font-style: normal; font-weight: 300; color: #a8a8a8; }

.dialog { position: absolute; left: 1301px; top: 410px; width: 882px; background: #ebebeb; border-radius: 12px; border: 1px solid #b2b2b2; box-shadow: 0 36px 72px 8px rgba(0, 0, 0, 0.42), 0 0 40px rgba(0, 0, 0, 0.18); }
.dlg-title { height: 44px; line-height: 44px; text-align: center; font-size: 26px; color: #474747; background: linear-gradient(#e9e9e9, #cfcfcf); border-bottom: 2px solid #b8b8b8; border-radius: 12px 12px 0 0; }
.dlg-body { padding: 0 30px 22px; }
.picker { height: 101px; display: flex; align-items: center; justify-content: space-between; }
.sel { position: relative; flex: none; width: 177px; height: 40px; background: #fff; border: 1px solid #c9c9c9; border-bottom: 2px solid #b9b9b9; border-radius: 7px; }
.sel.wide { width: 377px; }
.sel.pagesel { width: 618px; }
.sel select { display: block; appearance: none; width: 100%; height: 36px; padding: 0 40px 0 16px; border: 0; background: none; color: #242424; }
.arrows { position: absolute; right: -1px; top: -1px; width: 33px; height: 40px; border-radius: 0 7px 7px 0; background: linear-gradient(#6fa1f4, #2f68f2); fill: none; stroke: #fff; stroke-width: 3px; pointer-events: none; }
.steps { display: flex; gap: 4px; padding-right: 1px; }
.steps .push { width: 87px; }
.push { height: 40px; background: #fff; border: 1px solid #cacaca; border-bottom: 2px solid #b9b9b9; border-radius: 8px; }
.block { border-top: 2px solid #d3d3d3; padding: 6px 0 12px; }
.picker + .block { padding-top: 16px; }
.row { height: 60px; padding-top: 10px; display: flex; align-items: flex-start; }
.row label { flex: 1; line-height: 42px; }
.rowicon { position: relative; flex: none; width: 70px; height: 40px; padding-left: 5px; }
.rowicon b { position: absolute; left: 40px; top: -6px; font-weight: 400; font-size: 26px; }
.row .sel:last-child { margin-right: 202px; }
.row .sel.wide:last-child { margin-right: 2px; }
.sample { flex: none; width: 180px; height: 46px; margin-left: 22px; padding: 0 6px 6px; background: #ebebeb; border: 2px solid #a0a0a0; border-top-color: #777; border-radius: 0; color: #111; }
.note { height: 90px; padding-top: 4px; border-top: 2px solid #d3d3d3; white-space: nowrap; }
.bottomset { display: flex; height: 190px; border-top: 2px solid #d3d3d3; border-bottom: 2px solid #d3d3d3; padding: 24px 0 26px; }
.cond { flex: none; width: 414px; border-right: 2px solid #d3d3d3; }
.cond .push { width: 378px; margin-top: 36px; }
.totals { padding-left: 26px; }
.totals legend { height: 37px; }
.totals label { display: flex; align-items: center; gap: 4px; height: 50px; color: #111; }
.totals input { appearance: none; width: 32px; height: 32px; border-radius: 50%; background: #fff; border: 1px solid #bdbdbd; }
.totals input:checked { background: radial-gradient(circle, #fff 5px, #4a80ee 6px); border-color: #4a80ee; }
.dlg-foot { display: flex; justify-content: flex-end; gap: 22px; padding: 28px 2px 0 0; }
.dlg-foot .push { width: 177px; }
.push.primary { color: #fff; border: 1px solid #3b6fe8; background: linear-gradient(#74a2f4, #2f68f2); }
.menu { position: absolute; left: 5px; top: 37px; width: 631px; padding: 8px 0; background: #eeeeee; border-radius: 9px; border: 1px solid #c6c6c6; box-shadow: 0 10px 24px rgba(0, 0, 0, 0.32); color: #363636; }
.menu li { height: 32px; line-height: 32px; display: flex; }
.menu li span { width: 42px; padding-left: 10px; font-family: "DejaVu Sans", sans-serif; font-size: 26px; }
.menu li.on { background: #5c8df0; color: #fff; font-weight: 500; }
</style>
